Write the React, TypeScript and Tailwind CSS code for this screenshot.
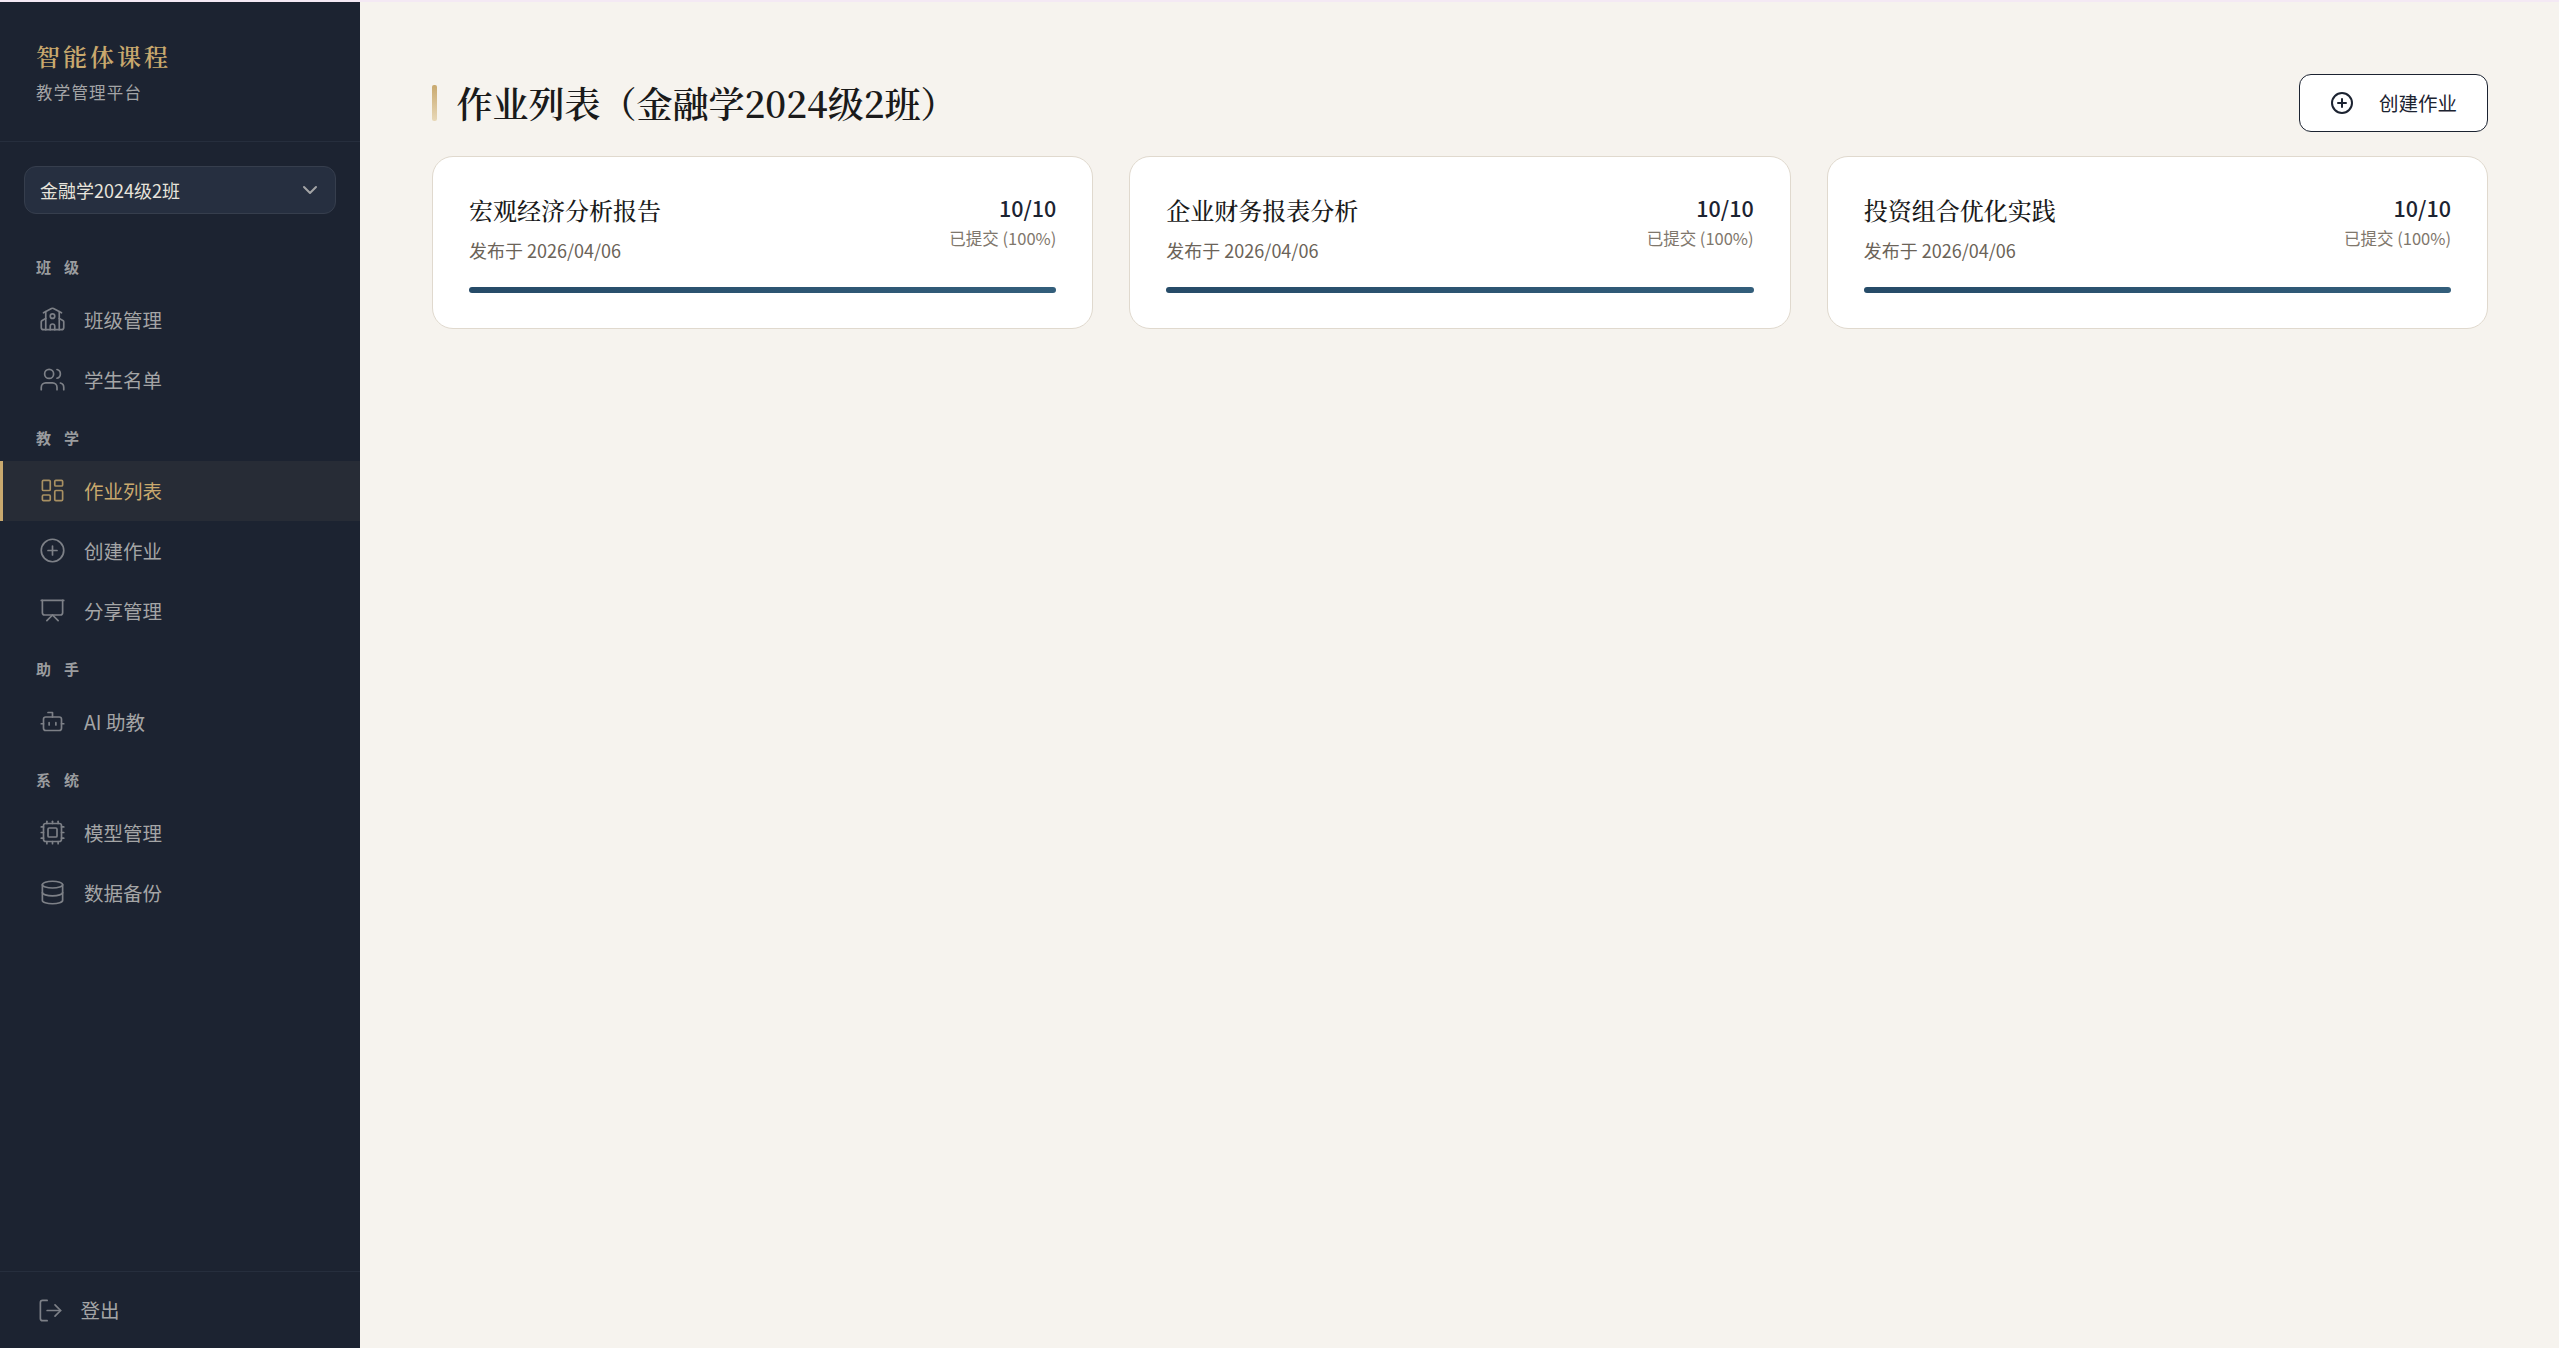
import { Bot, ChevronDown, CirclePlus, Cpu, Database, LayoutDashboard, LogOut, Presentation, School, Users } from 'lucide-react'
import type { LucideIcon } from 'lucide-react'

type NavItem = { label: string; icon: LucideIcon; active?: boolean }

const sections: { title: string; items: NavItem[] }[] = [
  {
    title: '班级',
    items: [
      { label: '班级管理', icon: School },
      { label: '学生名单', icon: Users },
    ],
  },
  {
    title: '教学',
    items: [
      { label: '作业列表', icon: LayoutDashboard, active: true },
      { label: '创建作业', icon: CirclePlus },
      { label: '分享管理', icon: Presentation },
    ],
  },
  {
    title: '助手',
    items: [{ label: 'AI 助教', icon: Bot }],
  },
  {
    title: '系统',
    items: [
      { label: '模型管理', icon: Cpu },
      { label: '数据备份', icon: Database },
    ],
  },
]

const assignments = ['宏观经济分析报告', '企业财务报表分析', '投资组合优化实践']

function Sidebar() {
  return (
    <aside className="flex w-[360px] shrink-0 flex-col bg-[#1c2331]">
      <div className="h-[140px] border-b border-[#262e3d] pl-[36px] pt-[35.5px]">
        <div className="font-['Noto_Serif_CJK_SC','Noto_Sans_CJK_SC',serif] text-[24px] font-semibold leading-[36px] tracking-[3px] text-[#c9a96e]">
          智能体课程
        </div>
        <div className="mt-[5.5px] text-[16.5px] leading-[26px] tracking-[1.2px] text-[#a3a4a6]">教学管理平台</div>
      </div>

      <div className="px-[24px] pt-[24px]">
        <div className="flex h-[48px] items-center justify-between rounded-[12px] border-[1.5px] border-[#363e4d] bg-[#262f40] pl-[15px] pr-[13.5px] text-[18px] text-[#e8e4dc]">
          <span>金融学2024级2班</span>
          <ChevronDown size={24} strokeWidth={2} className="text-[#a3a4a6]" />
        </div>
      </div>

      <nav className="flex-1 pt-[24.5px]">
        {sections.map((section) => (
          <div key={section.title}>
            <div className="h-[51px] pl-[36px] pt-[16px] text-[15px] font-bold leading-[24px] tracking-[13px] text-[#9a9c9f]">
              {section.title}
            </div>
            {section.items.map((item) => (
              <div
                key={item.label}
                className={
                  item.active
                    ? 'flex h-[60px] items-center gap-[18px] border-l-[3px] border-[#c9a96e] bg-[#272c36] pl-[36px] text-[19.5px] text-[#c9a96e]'
                    : 'flex h-[60px] items-center gap-[18px] border-l-[3px] border-transparent pl-[36px] text-[19.5px] text-[#a4a5a6]'
                }
              >
                <item.icon size={27} strokeWidth={1.5} className={item.active ? 'opacity-80' : 'text-[#7d8087]'} />
                <span>{item.label}</span>
              </div>
            ))}
          </div>
        ))}
      </nav>

      <div className="flex h-[77px] items-center gap-[17px] border-t border-[#262e3d] pl-[36.5px] text-[19.5px] text-[#a4a5a6]">
        <LogOut size={27} strokeWidth={1.5} className="text-[#7d8087]" />
        <span>登出</span>
      </div>
    </aside>
  )
}

function AssignmentCard({ title }: { title: string }) {
  return (
    <div className="h-[173.5px] rounded-[21px] border-[1.5px] border-[#e0d9ce] bg-white px-[36px] pt-[32.5px]">
      <div className="flex items-start justify-between">
        <div>
          <div className="font-['Noto_Serif_CJK_SC','Noto_Sans_CJK_SC',serif] text-[24px] font-medium leading-[42px] text-[#1a1a1a]">
            {title}
          </div>
          <div className="mt-[4px] text-[18px] leading-[30px] text-[#6b6358]">发布于 2026/04/06</div>
        </div>
        <div className="mt-[1.5px] text-right">
          <div className="text-[21.5px] font-medium leading-[34px] text-[#1c2331]">10/10</div>
          <div className="text-[16.5px] leading-[26px] text-[#7f776c]">已提交 (100%)</div>
        </div>
      </div>
      <div className="mt-[21.5px] h-[6px] rounded-full bg-gradient-to-r from-[#264b68] to-[#335e7b]" />
    </div>
  )
}

export default function App() {
  return (
    <div className="flex h-[1348px] w-full overflow-hidden bg-[#f4e9f4] pt-[2px] font-['Noto_Sans_CJK_SC',sans-serif]">
      <Sidebar />
      <main className="flex-1 bg-[#f6f3ee] pl-[72px] pr-[71px] pt-[72px]">
        <div className="mb-[23.5px] flex h-[58px] items-center justify-between">
          <div className="flex items-center gap-[20px]">
            <div className="h-[36px] w-[4.5px] rounded-[2px] bg-gradient-to-b from-[#c9a96e] to-[#e8d8b8]" />
            <h1 className="font-['Noto_Serif_CJK_SC','Noto_Sans_CJK_SC',serif] text-[36px] font-semibold leading-[50px] text-[#1a1a1a]">
              作业列表（金融学2024级2班）
            </h1>
          </div>
          <button className="flex h-[58px] items-center gap-[25px] rounded-[12px] border-[1.5px] border-[#1c2331] bg-white pl-[30px] pr-[30px] text-[19.5px] text-[#1c2331]">
            <CirclePlus size={24} strokeWidth={2} />
            创建作业
          </button>
        </div>
        <div className="grid grid-cols-3 gap-[36px]">
          {assignments.map((title) => (
            <AssignmentCard key={title} title={title} />
          ))}
        </div>
      </main>
    </div>
  )
}
